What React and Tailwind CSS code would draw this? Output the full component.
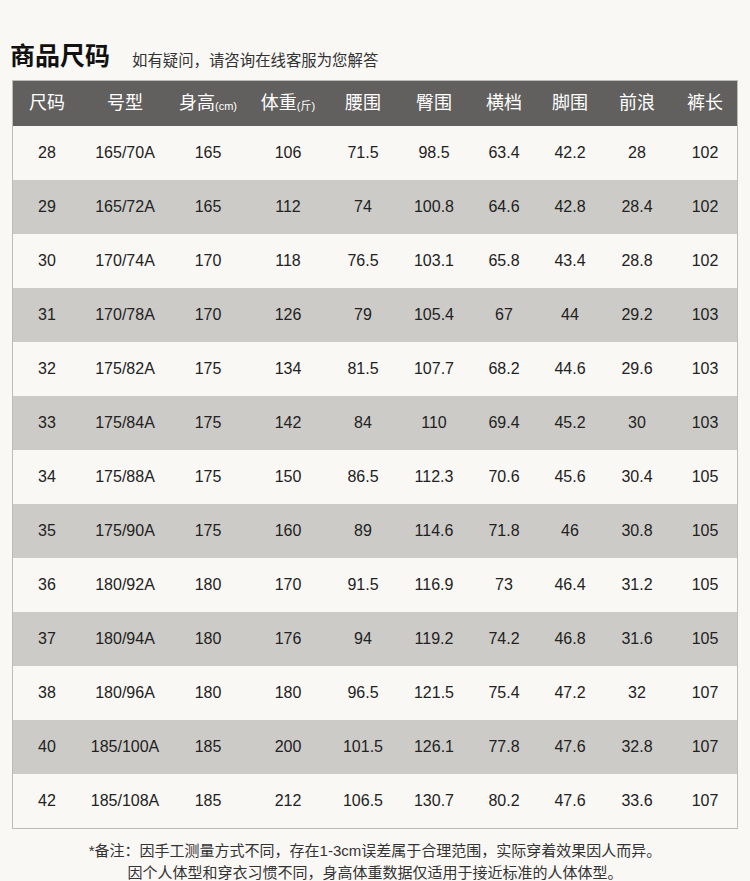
const headers = [
  ['尺码'], ['号型'], ['身高', '(cm)'], ['体重', '(斤)'], ['腰围'], ['臀围'], ['横档'], ['脚围'], ['前浪'], ['裤长'],
];

const rows = [
  ['28', '165/70A', '165', '106', '71.5', '98.5', '63.4', '42.2', '28', '102'],
  ['29', '165/72A', '165', '112', '74', '100.8', '64.6', '42.8', '28.4', '102'],
  ['30', '170/74A', '170', '118', '76.5', '103.1', '65.8', '43.4', '28.8', '102'],
  ['31', '170/78A', '170', '126', '79', '105.4', '67', '44', '29.2', '103'],
  ['32', '175/82A', '175', '134', '81.5', '107.7', '68.2', '44.6', '29.6', '103'],
  ['33', '175/84A', '175', '142', '84', '110', '69.4', '45.2', '30', '103'],
  ['34', '175/88A', '175', '150', '86.5', '112.3', '70.6', '45.6', '30.4', '105'],
  ['35', '175/90A', '175', '160', '89', '114.6', '71.8', '46', '30.8', '105'],
  ['36', '180/92A', '180', '170', '91.5', '116.9', '73', '46.4', '31.2', '105'],
  ['37', '180/94A', '180', '176', '94', '119.2', '74.2', '46.8', '31.6', '105'],
  ['38', '180/96A', '180', '180', '96.5', '121.5', '75.4', '47.2', '32', '107'],
  ['40', '185/100A', '185', '200', '101.5', '126.1', '77.8', '47.6', '32.8', '107'],
  ['42', '185/108A', '185', '212', '106.5', '130.7', '80.2', '47.6', '33.6', '107'],
];

const cols = 'grid grid-cols-[68px_88px_78px_82px_68px_74px_66px_66px_68px_68px]';

export default function App() {
  return (
    <div className="w-[750px] h-[881px] bg-[#f9f8f5] text-[#222] font-['Liberation_Sans','Noto_Sans_CJK_SC',sans-serif] overflow-hidden">
      {/* title */}
      <div className="flex items-end h-[72px] pl-[10px] pb-[3px]">
        <span className="text-[25px] font-bold text-[#111] leading-none">商品尺码</span>
        <span className="ml-[22px] text-[15.4px] text-[#333] leading-none mb-[1px]">如有疑问，请咨询在线客服为您解答</span>
      </div>

      <div className="mx-[12px] mt-[8px] border border-[#bdbcb9]">
        <div className={`${cols} h-[45px] bg-[#62605e] text-white`}>
          {headers.map(([t, s], i) => (
            <div key={i} className="flex items-center justify-center text-[18px]">
              {t}{s && <span className="text-[11px] mt-[5px]">{s}</span>}
            </div>
          ))}
        </div>
        {rows.map((r, i) => (
          <div key={i} className={`${cols} h-[54px] ${i % 2 ? 'bg-[#cccbc7]' : 'bg-[#f9f8f5]'}`}>
            {r.map((c, j) => (
              <div key={j} className="flex items-center justify-center text-[16px]">{c}</div>
            ))}
          </div>
        ))}
      </div>

      <div className="mt-[14px] text-center text-[15px] leading-[16px] text-[#333]">
        <div>*备注：因手工测量方式不同，存在1-3cm误差属于合理范围，实际穿着效果因人而异。</div>
        <div className="mt-[6px]">因个人体型和穿衣习惯不同，身高体重数据仅适用于接近标准的人体体型。</div>
      </div>
    </div>
  );
}
